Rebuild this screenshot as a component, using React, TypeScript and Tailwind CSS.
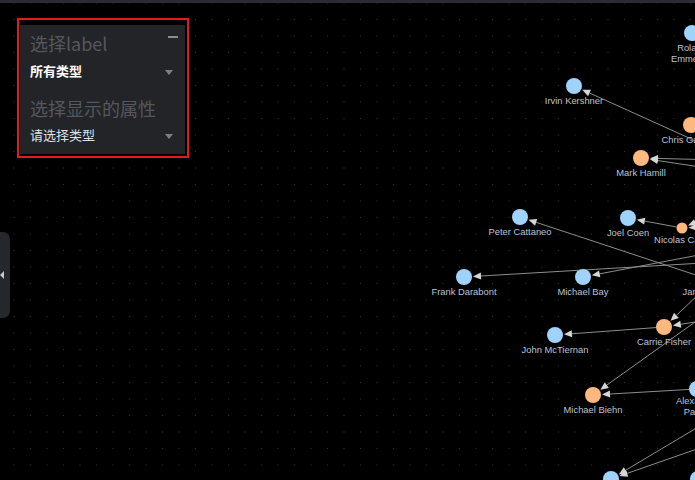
import React from "react";

type N = { id: string; x: number; y: number; r: number; c: "b" | "o"; label: string[]; lx?: number; ly?: number };

const BLUE = "#9fd3fb";
const ORANGE = "#fdb87f";

const nodes: N[] = [
  { id: "roland", x: 692, y: 33, r: 8, c: "b", label: ["Roland", "Emmerich"] },
  { id: "irvin", x: 574, y: 86, r: 8, c: "b", label: ["Irvin Kershner"] },
  { id: "chris", x: 691, y: 125, r: 8, c: "o", label: ["Chris Gardner"] },
  { id: "mark", x: 641, y: 158, r: 8, c: "o", label: ["Mark Hamill"] },
  { id: "peter", x: 520, y: 217, r: 8, c: "b", label: ["Peter Cattaneo"] },
  { id: "joel", x: 628, y: 218, r: 8, c: "b", label: ["Joel Coen"] },
  { id: "nicolas", x: 682, y: 228, r: 5.5, c: "o", label: ["Nicolas Cage"], ly: 243 },
  { id: "frank", x: 464, y: 277, r: 8, c: "b", label: ["Frank Darabont"] },
  { id: "bay", x: 583, y: 277, r: 8, c: "b", label: ["Michael Bay"] },
  { id: "james", x: 717, y: 277, r: 8, c: "b", label: ["James Cameron"] },
  { id: "john", x: 555, y: 335, r: 8, c: "b", label: ["John McTiernan"] },
  { id: "carrie", x: 664, y: 327, r: 8, c: "o", label: ["Carrie Fisher"] },
  { id: "biehn", x: 593, y: 395, r: 8, c: "o", label: ["Michael Biehn"] },
  { id: "alex", x: 697, y: 389, r: 8, c: "b", label: ["Alexander", "Payne"], ly: 404 },
  { id: "b1", x: 611, y: 479, r: 8, c: "b", label: [] },
  { id: "b2", x: 698, y: 479, r: 8, c: "b", label: [] },
];

const byId = Object.fromEntries(nodes.map((n) => [n.id, n]));

type P = [number, number];
const edges: [P | string, string][] = [
  [[720, 152], "irvin"],
  [[720, 160], "mark"],
  [[720, 170], "mark"],
  ["nicolas", "joel"],
  [[720, 212], "nicolas"],
  [[720, 226], "nicolas"],
  [[720, 283], "peter"],
  [[720, 262], "frank"],
  [[720, 251], "bay"],
  ["james", "carrie"],
  [[720, 318], "carrie"],
  ["carrie", "john"],
  [[730, 297], "biehn"],
  ["alex", "biehn"],
  [[720, 414], "b1"],
  [[720, 441], "b1"],
];

function Edge({ from, to }: { from: P | string; to: string }) {
  const t = byId[to];
  let sx: number, sy: number, sr = 0;
  if (typeof from === "string") {
    const f = byId[from];
    sx = f.x;
    sy = f.y;
    sr = f.r;
  } else {
    sx = from[0];
    sy = from[1];
  }
  const dx = t.x - sx;
  const dy = t.y - sy;
  const len = Math.hypot(dx, dy);
  const ux = dx / len;
  const uy = dy / len;
  const x1 = sx + ux * sr;
  const y1 = sy + uy * sr;
  const tipX = t.x - ux * (t.r + 1);
  const tipY = t.y - uy * (t.r + 1);
  const al = 8;
  const aw = 3.5;
  const bx = tipX - ux * al;
  const by = tipY - uy * al;
  const px = -uy;
  const py = ux;
  return (
    <g>
      <line x1={x1} y1={y1} x2={bx} y2={by} stroke="#8d8d8d" strokeWidth={1} />
      <polygon
        points={`${tipX},${tipY} ${bx + px * aw},${by + py * aw} ${bx - px * aw},${by - py * aw}`}
        fill="#d6d6d6"
      />
    </g>
  );
}

export default function App() {
  return (
    <div className="w-[695px] h-[480px] bg-black flex flex-col overflow-hidden">
      <div className="h-[3px] bg-[#2a2c31] shrink-0" />
      <div className="relative flex-1 bg-black bg-[radial-gradient(circle,#2c2c2c_0.7px,transparent_1px)] bg-[size:16.5px_16.5px] bg-[position:5.75px_8.25px]">
        <svg className="absolute inset-0" width={695} height={477} viewBox="0 3 695 477">
          {edges.map(([f, t], i) => (
            <Edge key={i} from={f} to={t} />
          ))}
          {nodes.map((n) => (
            <g key={n.id}>
              <circle cx={n.x} cy={n.y} r={n.r} fill={n.c === "b" ? BLUE : ORANGE} />
              {n.label.map((l, i) => (
                <text
                  key={i}
                  x={n.lx ?? n.x}
                  y={(n.ly ?? n.y + 18) + i * 10.5}
                  textAnchor="middle"
                  fill="#b9c3d6"
                  fontSize={9.4}
                  fontFamily="'Liberation Sans', Arial, sans-serif"
                >
                  {l}
                </text>
              ))}
            </g>
          ))}
        </svg>

        <div className="absolute left-[17px] top-[15px] w-[172px] h-[140px] border-2 border-[#e3191f] pl-[1px] pt-[5px] pr-[2px] pb-[2px] flex">
          <div className="relative flex-1 bg-[#232428] px-[10px] pt-[6px] font-['Noto_Sans_CJK_SC','Noto_Sans',sans-serif]">
            <div className="absolute right-[7px] top-[11px] w-[10px] h-[2px] bg-[#8a8c92]" />
            <div className="text-[18px] leading-[24px] text-[#55575c]">选择label</div>
            <div className="h-[32px] flex items-center justify-between pr-[2px]">
              <span className="text-[13px] font-bold text-white">所有类型</span>
              <span className="w-0 h-0 border-l-[4px] border-r-[4px] border-t-[5px] border-l-transparent border-r-transparent border-t-[#7c7f87] mt-[2px]" />
            </div>
            <div className="mt-[9px] text-[18px] leading-[24px] text-[#55575c]">选择显示的属性</div>
            <div className="h-[30px] flex items-center justify-between pr-[2px]">
              <span className="text-[13px] text-[#dde1e8]">请选择类型</span>
              <span className="w-0 h-0 border-l-[4px] border-r-[4px] border-t-[5px] border-l-transparent border-r-transparent border-t-[#7c7f87] mt-[2px]" />
            </div>
          </div>
        </div>

        <div className="absolute left-0 top-[229px] w-[10px] h-[86px] rounded-r-[7px] bg-[#26272b] flex items-center">
          <span className="w-0 h-0 border-t-[4px] border-b-[4px] border-r-[4px] border-t-transparent border-b-transparent border-r-[#c3c7cf]" />
        </div>
      </div>
    </div>
  );
}
